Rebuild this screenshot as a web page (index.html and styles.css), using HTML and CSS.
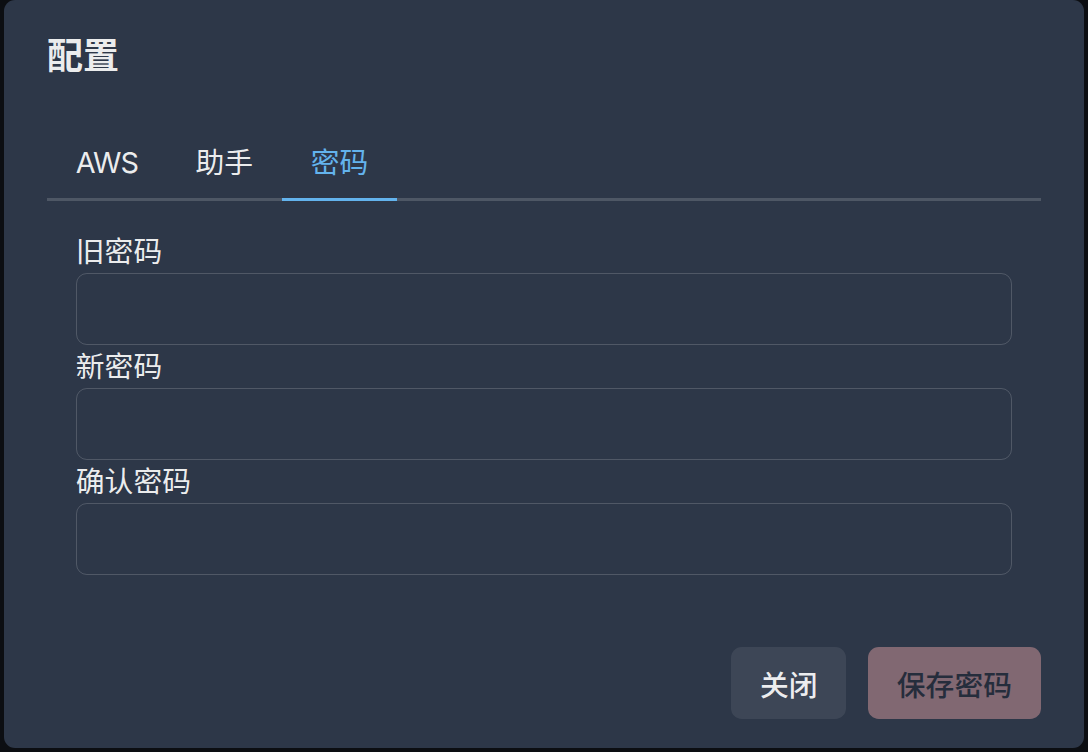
FILE: index.html
```html
<!DOCTYPE html>
<html lang="zh">
<head>
<meta charset="utf-8">
<title>配置</title>
<link rel="stylesheet" href="styles.css">
</head>
<body>
<div class="modal">
  <header class="modal-header">配置</header>
  <div class="modal-body">
    <div class="tablist">
      <button class="tab tab-latin">AWS</button>
      <button class="tab">助手</button>
      <button class="tab selected">密码</button>
    </div>
    <div class="panel">
      <label class="label">旧密码</label>
      <input class="input" type="password">
      <label class="label">新密码</label>
      <input class="input" type="password">
      <label class="label">确认密码</label>
      <input class="input" type="password">
    </div>
  </div>
  <footer class="modal-footer">
    <button class="btn btn-ghost">关闭</button>
    <button class="btn btn-pink" disabled>保存密码</button>
  </footer>
</div>
</body>
</html>
```
FILE: styles.css
```css
* { box-sizing: border-box; }
html, body { margin: 0; padding: 0; }
body {
  background: #0c0e12;
  font-family: "Inter", "Noto Sans CJK SC", sans-serif;
  color: rgba(255, 255, 255, 0.92);
  height: 752px;
  overflow: hidden;
}
.modal {
  width: 1080px;
  margin: 0 4px;
  background: #2d3748;
  border-radius: 11px;
  display: flex;
  flex-direction: column;
}
.modal-header {
  padding: 29px 43px;
  font-size: 36px;
  line-height: 54px;
  font-weight: 600;
}
.modal-body {
  padding: 14.4px 43px;
}
.tablist {
  display: flex;
  border-bottom: 3.6px solid rgba(255, 255, 255, 0.16);
}
.tab {
  background: none;
  border: none;
  border-bottom: 3.6px solid transparent;
  margin-bottom: -3.6px;
  padding: 14.4px 28.8px;
  font-family: inherit;
  font-size: 28.8px;
  line-height: 43.2px;
  color: rgba(255, 255, 255, 0.92);
}
.tab-latin {
  letter-spacing: -1px;
}
.tab.selected {
  color: #63b3ed;
  border-bottom-color: #63b3ed;
}
.panel {
  padding: 28.8px;
  display: flex;
  flex-direction: column;
}
.label {
  font-size: 28.8px;
  line-height: 43.2px;
}
.input {
  height: 72px;
  width: 100%;
  background: transparent;
  border: 1px solid rgba(255, 255, 255, 0.17);
  border-radius: 10.8px;
  padding: 0 28.8px;
  font-size: 28.8px;
  color: inherit;
  outline: none;
}
.modal-footer {
  display: flex;
  justify-content: flex-end;
  gap: 21.6px;
  padding: 28.8px 43.2px;
}
.btn {
  height: 72px;
  padding: 0 28.8px;
  border: none;
  border-radius: 10.8px;
  font-family: inherit;
  font-size: 28.8px;
  font-weight: 500;
}
.btn-ghost {
  background: rgba(255, 255, 255, 0.08);
  color: rgba(255, 255, 255, 0.92);
}
.btn-pink {
  background: #feb2b2;
  color: #1a202c;
  opacity: 0.4;
}
```
